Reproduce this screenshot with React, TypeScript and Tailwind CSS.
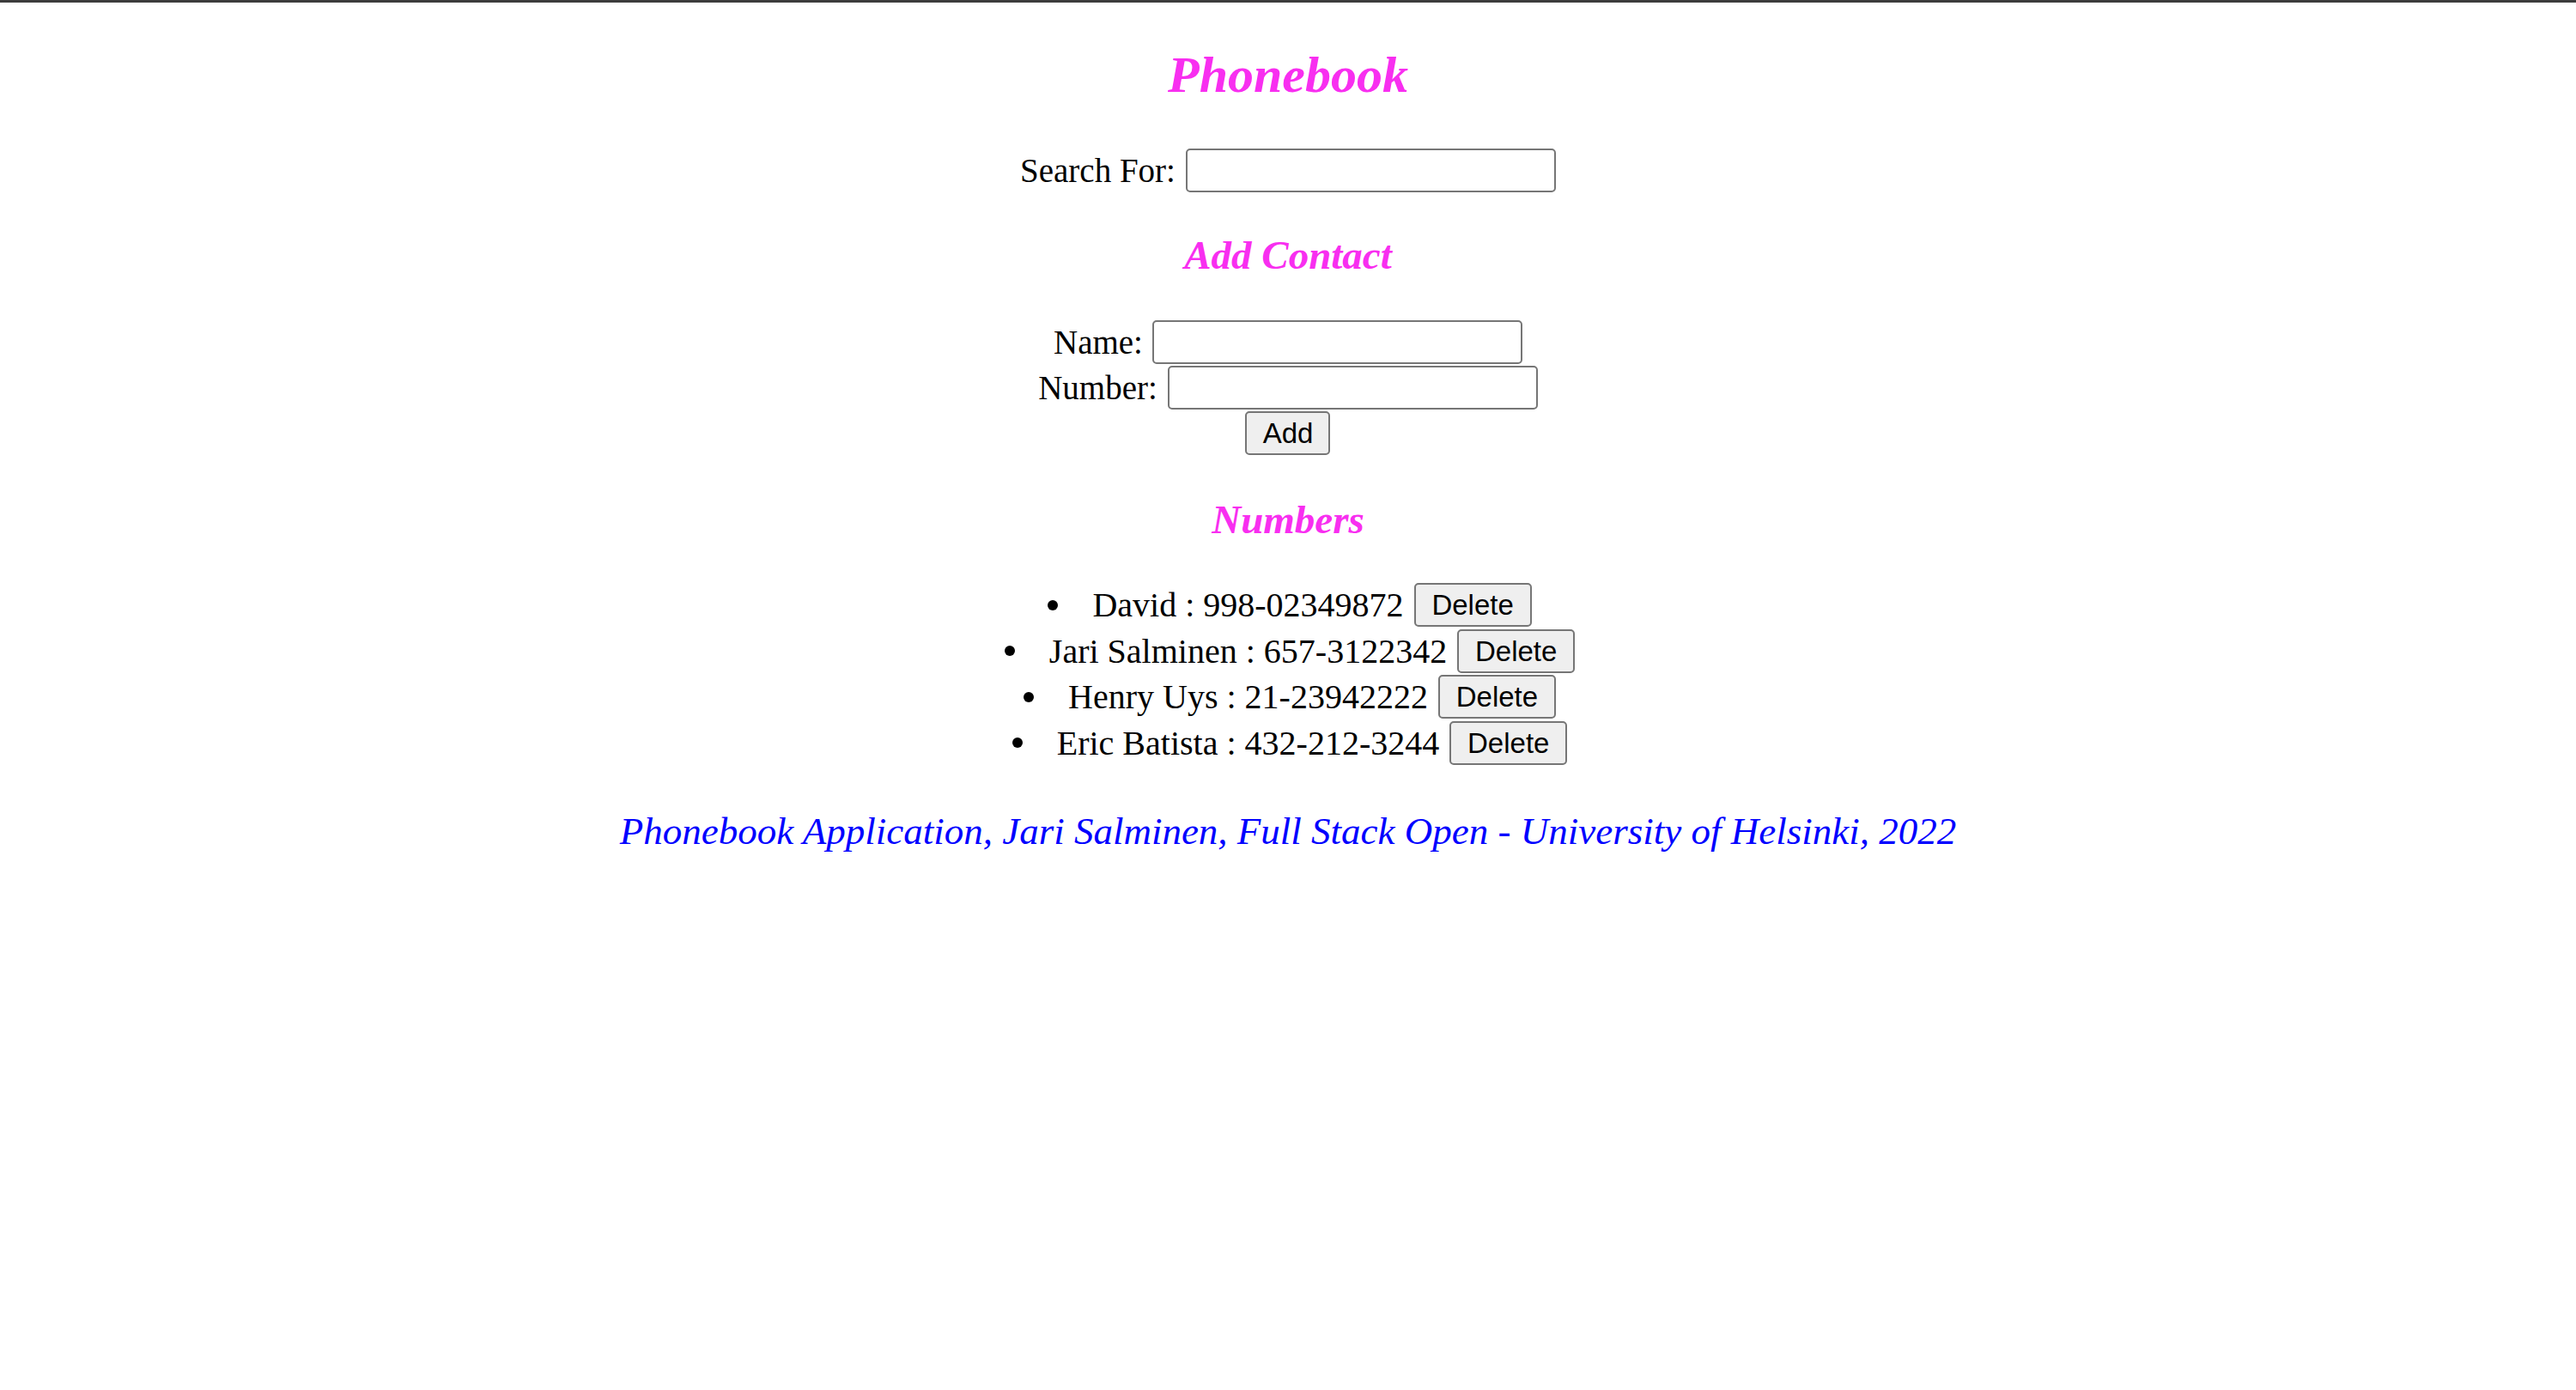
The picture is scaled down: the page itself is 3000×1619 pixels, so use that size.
import React, { useState } from 'react';

interface Person {
  id: number;
  name: string;
  number: string;
}

const initialPersons: Person[] = [
  { id: 1, name: 'David', number: '998-02349872' },
  { id: 2, name: 'Jari Salminen', number: '657-3122342' },
  { id: 3, name: 'Henry Uys', number: '21-23942222' },
  { id: 4, name: 'Eric Batista', number: '432-212-3244' },
];

const inputClass = 'w-[431px] h-[51px] border-2 border-[#767676] rounded-[5px] bg-white px-2 text-[33px] outline-none';
const buttonClass =
  "h-[51px] bg-[#efefef] border-2 border-[#767676] rounded-[5px] text-[33px] leading-none text-black font-['Liberation_Sans',Arial,sans-serif] hover:bg-[#e5e5e5]";

const App: React.FC = () => {
  const [persons, setPersons] = useState<Person[]>(initialPersons);
  const [search, setSearch] = useState('');
  const [newName, setNewName] = useState('');
  const [newNumber, setNewNumber] = useState('');

  const shown = persons.filter(p => p.name.toLowerCase().includes(search.toLowerCase()));

  const handleAdd = (e: React.FormEvent) => {
    e.preventDefault();
    if (!newName.trim()) return;
    setPersons(persons.concat({ id: Date.now(), name: newName, number: newNumber }));
    setNewName('');
    setNewNumber('');
  };

  const handleDelete = (id: number) => {
    setPersons(persons.filter(p => p.id !== id));
  };

  return (
    <div className="min-h-screen bg-white text-black font-['Liberation_Serif','Times_New_Roman',serif]">
      <div className="h-[3px] bg-[#3c3c3c]" />
      <div className="flex flex-col items-center">
        <h1 className="mt-[48px] text-[60px] leading-[72px] font-bold italic text-[#f82ef0]">Phonebook</h1>

        {/* Search */}
        <div className="mt-[50px] flex items-center gap-[12px] text-[39px] leading-[45px]">
          <span>Search For:</span>
          <input value={search} onChange={e => setSearch(e.target.value)} className={inputClass} />
        </div>

        <h2 className="mt-[46px] text-[47px] leading-[54px] font-bold italic text-[#f82ef0]">Add Contact</h2>

        {/* Add form */}
        <form onSubmit={handleAdd} className="mt-[49px] flex flex-col items-center gap-[2px] text-[39px] leading-[45px]">
          <div className="flex items-center gap-[11px]">
            <span>Name:</span>
            <input value={newName} onChange={e => setNewName(e.target.value)} className={inputClass} />
          </div>
          <div className="flex items-center gap-[12px]">
            <span>Number:</span>
            <input value={newNumber} onChange={e => setNewNumber(e.target.value)} className={inputClass} />
          </div>
          <button type="submit" className={`${buttonClass} w-[99px]`}>Add</button>
        </form>

        <h2 className="mt-[48px] text-[47px] leading-[54px] font-bold italic text-[#f82ef0]">Numbers</h2>

        {/* List */}
        <ul className="mt-[47px] flex flex-col items-center gap-[2px] text-[40px] leading-[45px] pl-[4px]">
          {shown.map(p => (
            <li key={p.id} className="h-[51.5px] flex items-center">
              <span className="w-[12px] h-[12px] rounded-full bg-black mr-[40px]" />
              <span>{p.name} : {p.number}</span>
              <button onClick={() => handleDelete(p.id)} className={`${buttonClass} w-[137px] ml-[12px]`}>Delete</button>
            </li>
          ))}
        </ul>

        <p className="mt-[51px] text-[45px] leading-[52px] italic text-[#0000ff]">
          Phonebook Application, Jari Salminen, Full Stack Open - University of Helsinki, 2022
        </p>
      </div>
    </div>
  );
};

export default App;
